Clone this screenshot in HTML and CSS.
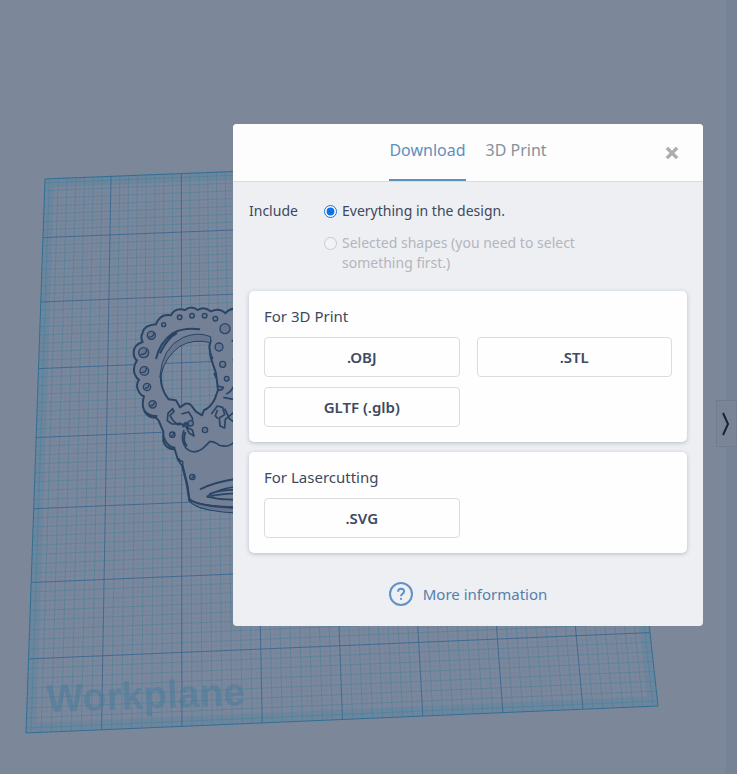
FILE: index.html
```html
<!DOCTYPE html>
<html lang="en">
<head>
<meta charset="utf-8">
<title>Download</title>
<link rel="stylesheet" href="styles.css">
</head>
<body>
<svg class="scene" viewBox="0 0 737 774" preserveAspectRatio="xMinYMin slice" aria-hidden="true">
  <g id="plane"></g>
  <text class="plane-label" transform="translate(47 712) rotate(-2)">Workplane</text>
  <g class="model" transform="translate(120 290) scale(.3333)">
    <path class="body" fill-rule="evenodd" d="M360 62Q335 48 316 70Q300 52 272 64Q252 48 233 60Q214 45 195 60Q165 52 153 76Q120 70 108 103Q72 106 68 128Q60 142 68 156Q40 164 41 190Q42 205 51 211Q36 232 45 254Q50 266 57 270Q46 284 55 302Q61 316 72 319Q64 345 73 362Q82 384 108 383L116 392L130 425L130 454Q137 478 164 478L174 510L186 522L200 580L208 632Q225 650 262 657L360 668Z M272 152Q230 136 185 160Q135 195 123 245Q118 295 146 328L168 331L180 352L196 341Q210 338 218 352L228 365L246 376L252 360Q270 355 284 328L294 300L288 250L273 205L268 170Z"/>
    <path class="shade" d="M120 262Q125 172 190 142Q233 124 272 140L272 158Q218 145 178 170Q134 203 123 255Z"/>
    <path class="shade" d="M206 625Q230 650 360 650V670Q250 665 218 642Z"/>
    <path class="edge wide" d="M108 207Q120 156 158 130Q190 112 240 118M120 190Q143 142 171 129"/>
    <path class="edge wide" d="M72 362Q88 380 112 378M130 440Q142 472 166 474M175 505l12 20 16 65 5 37q18 22 152 28"/>
    <path class="edge" d="M158 356l-14 14-2 22 14 10 24-2 18 10 10 20 14 8-5-18-12-6-5-12-28 2-14-14-8-14 12-11z"/>
    <path class="edge" d="M184 372l22-6 12 20-6 16-16-4-8 14"/>
    <path class="edge" d="M192 420q-12 30 6 54q22 22 50 2l22-22q18 2 28 12q28 8 44-10v-60l-14-10-14-30"/>
    <path class="edge wide" d="M196 426q-10 28 5 42"/>
    <path class="edge" d="M274 372l18-24 16 4 6 22-16 10 2 24 14 6 2-26 24-20M294 386l-8-8 6-18"/>
    <path class="edge wide" d="M240 598q42-22 110-32"/>
    <path class="edge" d="M260 620q36-24 90-30M260 620q40 10 84 9M268 612q30-12 80-13M272 618q30-6 72-8"/>
    <path class="edge" d="M318 312q14-4 22-22M294 300q12 2 16-8l-18-4M310 322l30 6"/>
    <path class="edge wide" d="M335 152h6M338 209h6M270 190l8 17M282 250l8 14"/>
    <g class="hole">
      <circle cx="131" cy="104" r="6"/><circle cx="179" cy="82" r="7"/><circle cx="216" cy="77" r="7"/><circle cx="254" cy="77" r="7"/><circle cx="286" cy="86" r="7"/>
      <circle cx="315" cy="116" r="15"/><circle cx="297" cy="171" r="12"/><circle cx="308" cy="223" r="9"/><circle cx="320" cy="266" r="7"/>
      <circle cx="94" cy="136" r="12"/><circle cx="71" cy="188" r="15"/><circle cx="73" cy="243" r="13"/><circle cx="81" cy="291" r="11"/><circle cx="98" cy="343" r="11"/>
      <circle cx="157" cy="434" r="8"/><circle cx="255" cy="420" r="8"/><circle cx="217" cy="561" r="8"/><circle cx="212" cy="400" r="8"/><circle cx="184" cy="518" r="5"/>
      <path d="M86 140q14 4 16-12M61 194q20 0 18-16M64 248q16 0 15-14M74 295q13 0 12-12M90 347q14 0 13-12M154 438q8-2 6-9M214 565q8-2 6-9"/>
    </g>
  </g>
</svg>

<aside class="sidebar">
  <button class="expand" type="button" aria-label="Expand panel">
    <svg viewBox="0 0 12 26"><path d="M2 2l5 11-5 11"/></svg>
  </button>
</aside>

<main class="overlay">
  <section class="dialog" role="dialog" aria-label="Download">
    <header class="head">
      <nav class="tabs">
        <button class="tab active" type="button">Download</button>
        <button class="tab" type="button">3D Print</button>
      </nav>
      <button class="close" type="button" aria-label="Close">
        <svg viewBox="0 0 14 14"><path d="M2.500 2.500l9 9M11.500 2.500l-9 9"/></svg>
      </button>
    </header>
    <div class="content">
      <div class="include">
        <span class="caption" id="include">Include</span>
        <div class="options" role="radiogroup" aria-labelledby="include">
          <label class="option"><input type="radio" name="scope" checked><span>Everything in the design.</span></label>
          <label class="option disabled"><input type="radio" name="scope" disabled><span>Selected shapes (you need to select something first.)</span></label>
        </div>
      </div>
      <section class="card">
        <h2>For 3D Print</h2>
        <div class="formats">
          <button type="button">.OBJ</button>
          <button type="button">.STL</button>
          <button type="button">GLTF (.glb)</button>
        </div>
      </section>
      <section class="card">
        <h2>For Lasercutting</h2>
        <div class="formats">
          <button type="button">.SVG</button>
        </div>
      </section>
      <a class="more" href="#">
        <svg viewBox="0 0 24 24"><circle cx="12" cy="12" r="11"/><path d="M9 9.800q.2-3 3.100-3 3 .1 3 2.800 0 1.300-1.600 2.300-1.500.9-1.500 2.300M12 16v1.800"/></svg>
        <span>More information</span>
      </a>
    </div>
  </section>
</main>
<script src="plane.js"></script>
</body>
</html>
```
FILE: styles.css
```css
* { box-sizing: border-box; }

body {
  margin: 0;
  min-height: 100vh;
  background: #7c8799;
  color: #3c4960;
  font: 14px/20px "Noto Sans", "Open Sans", sans-serif;
  overflow: hidden;
}

button { font: inherit; color: inherit; background: none; border: 0; padding: 0; }

.scene { position: fixed; inset: 0; width: 100%; height: 100%; }
.plane-fill { fill: #7a879c; }
.band { fill: none; stroke: #4c83a3; stroke-width: 9; opacity: .3; }
.faint { fill: none; stroke: #557f9c; stroke-width: 1; opacity: .1; }
.minor { fill: none; stroke: #3e7f96; stroke-width: 1; opacity: .42; }
.major { fill: none; stroke: #2d6290; stroke-width: 1; opacity: .75; }
.border { fill: none; stroke: #316f94; stroke-width: 1; }
.plane-label { font: bold 39px "Liberation Sans", sans-serif; fill: #467c9c; opacity: .5; }

.model .body { fill: #738096; stroke: #294464; stroke-width: 6; stroke-linejoin: round; }
.model .shade { fill: #67758e; stroke: #294464; stroke-width: 3; }
.model .edge { fill: none; stroke: #294464; stroke-width: 5; stroke-linejoin: round; }
.model .wide { stroke-width: 6; }
.model .hole { fill: #66768f; stroke: #294464; stroke-width: 4; }

.sidebar {
  position: fixed;
  inset: 0 0 0 auto;
  width: 11px;
  padding-top: 400px;
  background: #768295;
}
.expand {
  display: grid;
  place-items: center;
  width: 21px;
  height: 47px;
  margin-left: -10px;
  border: 1px solid #717c8e;
  background: #7a8597;
}
.expand svg { width: 12px; height: 26px; fill: none; stroke: #17233a; stroke-width: 2; }

.overlay {
  position: relative;
  display: flex;
  justify-content: flex-end;
  padding: 124px 34px 0 16px;
}
.dialog {
  width: 100%;
  max-width: 470px;
  border-radius: 4px;
  overflow: hidden;
  background: #edeff3;
}
.head {
  display: grid;
  grid-template-columns: 1fr auto 1fr;
  align-items: center;
  height: 58px;
  background: #fdfdfd;
  border-bottom: 1px solid #d9dde2;
}
.tabs { grid-column: 2; display: flex; gap: 20px; height: 57px; }
.tab {
  padding-bottom: 4px;
  font-size: 16px;
  color: #86919c;
  border-bottom: 2px solid transparent;
}
.tab.active { color: #5f8fc0; border-bottom-color: #5a93b8; }
.close { justify-self: end; width: 16px; height: 16px; margin-right: 23px; }
.close svg { display: block; width: 16px; height: 16px; fill: none; stroke: #a9adb1; stroke-width: 3; }

.content { display: flex; flex-direction: column; gap: 10px; padding: 19px 16px 20px; }
.include { display: flex; padding-bottom: 8px; }
.caption { width: 75px; }
.options { display: flex; flex-direction: column; gap: 12px; width: 270px; }
.option { display: flex; gap: 5px; }
.option input { flex: none; width: 13px; height: 13px; margin: 4px 0 0; accent-color: #0b72e8; }
.disabled { color: #b3b6bb; }

.card {
  padding: 15px;
  border-radius: 5px;
  background: #fefefe;
  box-shadow: 0 1px 4px rgba(60, 73, 96, .3);
}
.card h2 { margin: 0 0 11px; font-size: 15px; font-weight: 400; }
.formats { display: grid; grid-template-columns: 1fr 1fr; gap: 10px 17px; }
.formats button {
  height: 40px;
  border: 1px solid #d9dce0;
  border-radius: 4px;
  font-size: 15px;
  font-weight: 600;
}

.more {
  display: flex;
  align-items: center;
  align-self: center;
  gap: 10px;
  margin-top: 19px;
  font-size: 15px;
  color: #5380ab;
  text-decoration: none;
}
.more svg { width: 24px; height: 24px; fill: none; stroke: #5f92c6; stroke-width: 2; }
```
FILE: plane.js
```js
// Draws the workplane grid as a square seen in perspective.
const corners = [[45, 179], [598, 157], [658, 706], [26, 733]];
const units = 63;
const firstMajor = 7.5;

const [[x0, y0], [x1, y1], [x2, y2], [x3, y3]] = corners;
const dx1 = x1 - x2, dx2 = x3 - x2, dx3 = x0 - x1 + x2 - x3;
const dy1 = y1 - y2, dy2 = y3 - y2, dy3 = y0 - y1 + y2 - y3;
const det = dx1 * dy2 - dx2 * dy1;
const g = (dx3 * dy2 - dx2 * dy3) / det;
const h = (dx1 * dy3 - dx3 * dy1) / det;

function project(u, v) {
  const s = u / units, t = v / units, w = g * s + h * t + 1;
  return [
    ((x1 - x0 + g * x1) * s + (x3 - x0 + h * x3) * t + x0) / w,
    ((y1 - y0 + g * y1) * s + (y3 - y0 + h * y3) * t + y0) / w
  ].map(n => n.toFixed(1)).join(" ");
}

function path(name, d) {
  const el = document.createElementNS("http://www.w3.org/2000/svg", "path");
  el.setAttribute("class", name);
  el.setAttribute("d", d);
  document.getElementById("plane").append(el);
}

function frame(inset) {
  const far = units - inset;
  return "M" + [project(inset, inset), project(far, inset), project(far, far), project(inset, far)].join("L") + "Z";
}

const lines = { faint: "", minor: "", major: "" };
for (let k = -15; k <= 111; k++) {
  const p = firstMajor + k / 2;
  if (p <= 0 || p >= units) continue;
  const kind = k % 16 === 0 ? "major" : k % 2 === 0 ? "minor" : "faint";
  lines[kind] += `M${project(p, 0)}L${project(p, units)}M${project(0, p)}L${project(units, p)}`;
}

path("plane-fill", frame(0));
path("band", frame(0.5));
for (const kind in lines) path(kind, lines[kind]);
path("border", frame(0));
```
